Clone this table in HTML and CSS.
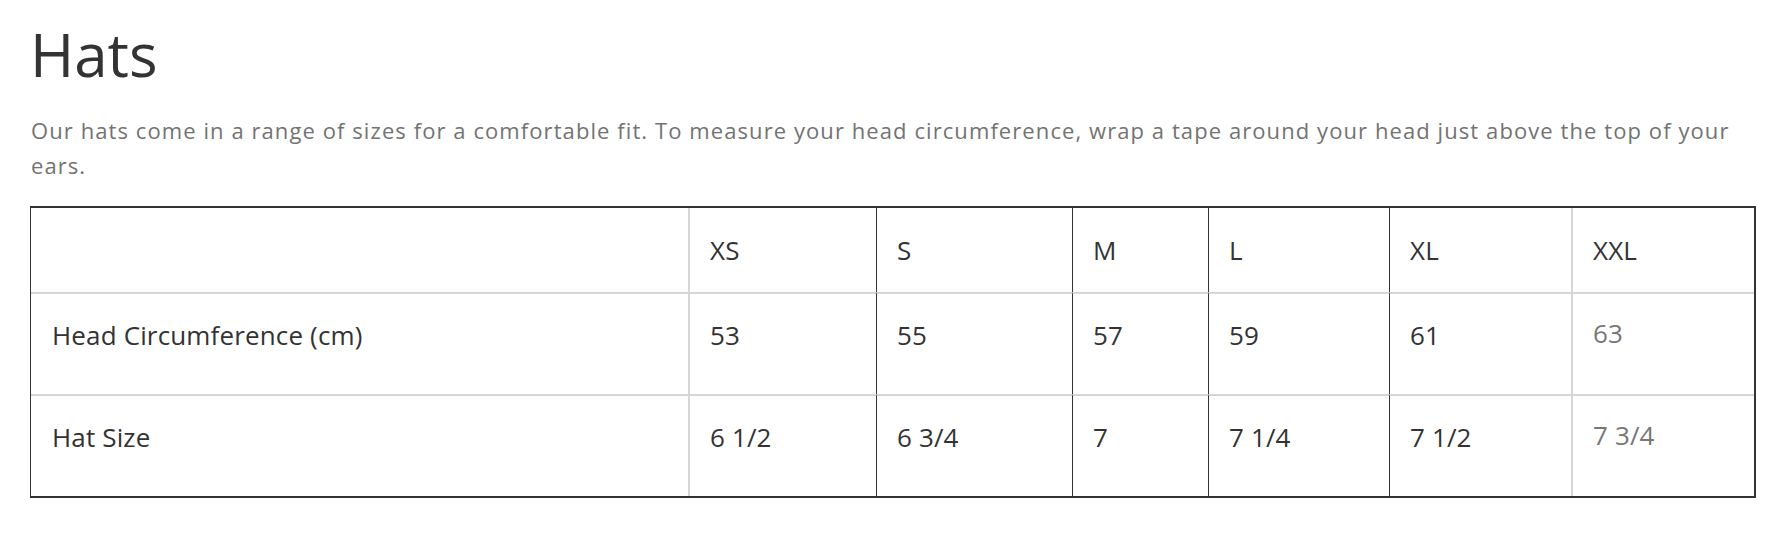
FILE: index.html
```html
<!DOCTYPE html>
<html lang="en">
<head>
<meta charset="utf-8">
<title>Hats</title>
<link rel="stylesheet" href="styles.css">
</head>
<body>
<main class="page">
  <h1 class="title">Hats</h1>
  <p class="intro">Our hats come in a range of sizes for a comfortable fit. To measure your head circumference, wrap a tape around your head just above the top of your ears.</p>
  <div class="chart" role="table">
    <div class="cell head c1"></div>
    <div class="cell head c2 light">XS</div>
    <div class="cell head c3">S</div>
    <div class="cell head c4">M</div>
    <div class="cell head c5">L</div>
    <div class="cell head c6">XL</div>
    <div class="cell head c7 light">XXL</div>

    <div class="cell body c1">Head Circumference (cm)</div>
    <div class="cell body c2 light">53</div>
    <div class="cell body c3">55</div>
    <div class="cell body c4">57</div>
    <div class="cell body c5">59</div>
    <div class="cell body c6">61</div>
    <div class="cell body c7 light muted">63</div>

    <div class="cell body c1">Hat Size</div>
    <div class="cell body c2 light">6 1/2</div>
    <div class="cell body c3">6 3/4</div>
    <div class="cell body c4">7</div>
    <div class="cell body c5">7 1/4</div>
    <div class="cell body c6">7 1/2</div>
    <div class="cell body c7 light muted">7 3/4</div>
  </div>
</main>
</body>
</html>
```
FILE: styles.css
```css
* { box-sizing: border-box; }
html, body { margin: 0; padding: 0; background: #fff; }
body { font-family: "Open Sans", "Liberation Sans", sans-serif; color: #333; }

.page { padding: 24px 0 0 30px; width: 1756px; }

.title {
  margin: 0;
  font-size: 60px;
  line-height: 60px;
  font-weight: 400;
  color: #333;
}

.intro {
  margin: 29px 0 0 1px;
  font-size: 22px;
  line-height: 35px;
  letter-spacing: 1.08px;
  color: #737373;
  width: 1725px;
}

.chart {
  margin-top: 23px;
  display: grid;
  grid-template-columns: 657px 188px 196px 136px 181px 182px 183px;
  grid-template-rows: 84px 102px 102px;
  border-top: 2px solid #333;
  border-right: 2px solid #333;
  border-bottom: 2px solid #333;
  border-left: 1px solid #333;
  width: 1726px;
}

.cell {
  display: flex;
  align-items: center;
  padding-left: 20px;
  font-size: 26px;
  letter-spacing: 0.15px;
  color: #333;
  border-left: 1px solid #333;
}
.cell.c1 { border-left: none; padding-left: 21px; }
.cell.light { border-left: 2px solid #d6d6d6; }

.cell.body {
  border-top: 2px solid #d6d6d6;
  padding-bottom: 19px;
}
.cell.muted { color: #777; padding-bottom: 23px; }
```
